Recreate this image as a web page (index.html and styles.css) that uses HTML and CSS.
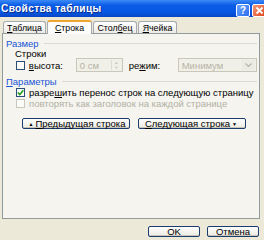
FILE: index.html
```html
<!DOCTYPE html>
<html lang="ru">
<head>
  <meta charset="UTF-8" />
  <title>Свойства таблицы</title>
  <link rel="stylesheet" href="styles.css">
</head>
<body>
  <div class="window">
    <div class="titlebar">
      <span class="title">Свойства таблицы</span>
      <div class="caption-btns">
        <span class="cap help">?</span>
        <span class="cap close">
          <svg width="9" height="9" viewBox="0 0 9 9"><path d="M1.5 1.5 L7.5 7.5 M7.5 1.5 L1.5 7.5" stroke="#fff" stroke-width="1.8"/></svg>
        </span>
      </div>
    </div>

    <div class="tabs">
      <div class="tab t1"><u>Т</u>аблица</div>
      <div class="tab t2 active"><u>С</u>трока</div>
      <div class="tab t3">Стол<u>б</u>ец</div>
      <div class="tab t4"><u>Я</u>чейка</div>
    </div>

    <div class="panel">
      <div class="group-title">Размер</div>
      <div class="sub">Строки</div>
      <div class="row size-row">
        <span class="check"></span>
        <span class="lbl"><u>в</u>ысота:</span>
        <span class="field spin">0 см<span class="spinner"><i>&#9650;</i><i>&#9660;</i></span></span>
        <span class="lbl mode">ре<u>ж</u>им:</span>
        <span class="field select">Минимум<span class="drop"><svg width="7" height="4" viewBox="0 0 7 4"><path d="M0.5 0.5 L3.5 3.5 L6.5 0.5" fill="none" stroke="#b8b7ac" stroke-width="1.2"/></svg></span></span>
      </div>

      <div class="group-title g2"><u>П</u>араметры</div>
      <div class="row opt">
        <span class="check checked"><svg width="7" height="7" viewBox="0 0 7 7"><path d="M0.8 3.5 L2.8 5.5 L6.3 1.2" fill="none" stroke="#21a121" stroke-width="1.6"/></svg></span>
        <span>разре<u>ш</u>ить перенос строк на следующую страницу</span>
      </div>
      <div class="row opt disabled">
        <span class="check"></span>
        <span>повторять как заголовок на каждой странице</span>
      </div>

      <div class="nav-btns">
        <span class="btn wide"><b class="arr">&#9650;</b> <u>П</u>редыдущая строка</span>
        <span class="btn wide"><u>С</u>ледующая строка <b class="arr">&#9660;</b></span>
      </div>
    </div>

    <div class="footer">
      <span class="btn ok">OK</span>
      <span class="btn cancel">Отмена</span>
    </div>
  </div>
</body>
</html>
```

FILE: styles.css
```css
* {
  margin: 0;
  padding: 0;
  box-sizing: border-box;
}
body {
  width: 264px;
  height: 240px;
  overflow: hidden;
  background: #ece9d8;
  font-family: "Liberation Sans", Arial, sans-serif;
  font-size: 9.5px;
  color: #000;
}
u {
  text-decoration: underline;
}
.titlebar {
  height: 17px;
  display: flex;
  align-items: center;
  justify-content: space-between;
  padding: 0 2px 0 1px;
  background: linear-gradient(#3d8bf7, #0c5ce8 30%, #0556e0 75%, #0a45c4);
}
.title {
  color: #fff;
  font-weight: bold;
  font-size: 10.2px;
  letter-spacing: 0.3px;
  text-shadow: 1px 1px 0 #0a2c8a;
}
.caption-btns {
  display: flex;
  gap: 2px;
  align-self: flex-end;
  margin-right: -4px;
}
.cap {
  width: 14px;
  height: 13px;
  border: 1px solid #fff;
  border-radius: 2px;
  display: flex;
  align-items: center;
  justify-content: center;
  color: #fff;
  font-weight: bold;
  font-size: 10px;
}
.help {
  background: linear-gradient(135deg, #6aa4ff, #2a6df0);
}
.close {
  background: linear-gradient(135deg, #f29a7a, #e0461c);
}
.tabs {
  display: flex;
  align-items: flex-end;
  height: 16px;
  padding-left: 3px;
  position: relative;
  z-index: 1;
}
.tab {
  height: 12px;
  border: 1px solid #a4aab0;
  border-bottom: none;
  border-radius: 3px 3px 0 0;
  background: linear-gradient(#fefefe, #ecebe6);
  display: flex;
  align-items: center;
  justify-content: center;
  margin-right: 1px;
  font-size: 8.8px;
}
.t1 { width: 43px; }
.t2 { width: 45px; }
.t3 { width: 44px; }
.t4 { width: 39px; }
.tab.active {
  height: 14px;
  margin-bottom: -1px;
  border-top: 2px solid #f0a530;
  background: #fcfcfb;
}
.panel {
  width: 258px;
  height: 186px;
  margin-left: 2px;
  border: 1px solid #919b9c;
  background: #f5f4ef;
  padding: 4px 2px 0 3px;
}
.group-title {
  display: flex;
  align-items: center;
  color: #2155d6;
  height: 11px;
}
.group-title::after {
  content: "";
  flex: 1;
  height: 1px;
  margin-left: 5px;
  background: #dcdbd2;
}
.g2 {
  margin-top: 4px;
}
.sub {
  margin-left: 9px;
  height: 9px;
  display: flex;
  align-items: center;
}
.row {
  display: flex;
  align-items: center;
  padding-left: 10px;
}
.size-row {
  height: 14px;
}
.check {
  width: 9px;
  height: 9px;
  border: 1px solid #2a4d7a;
  background: #fbfbf8;
  margin-right: 4px;
  display: flex;
  align-items: center;
  justify-content: center;
}
.lbl {
  width: 48px;
}
.lbl.mode {
  width: 50px;
  margin-left: 6px;
}
.field {
  height: 14px;
  border: 1px solid #c9c7ba;
  background: #f1f0e8;
  color: #b5b3a6;
  display: flex;
  align-items: center;
  padding-left: 3px;
  position: relative;
}
.spin {
  width: 48px;
}
.select {
  width: 81px;
}
.spinner {
  position: absolute;
  right: 1px;
  top: 1px;
  bottom: 1px;
  width: 10px;
  display: flex;
  flex-direction: column;
  border-left: 1px solid #dedcd0;
}
.spinner i {
  flex: 1;
  font-style: normal;
  font-size: 4px;
  color: #c2c0b4;
  display: flex;
  align-items: center;
  justify-content: center;
}
.drop {
  position: absolute;
  right: 1px;
  top: 1px;
  bottom: 1px;
  width: 13px;
  display: flex;
  align-items: center;
  justify-content: center;
  background: #ecebe3;
}
.opt {
  height: 11px;
}
.opt.disabled {
  color: #b3b1a4;
}
.opt.disabled .check {
  border-color: #c9c7ba;
}
.nav-btns {
  display: flex;
  gap: 8px;
  padding-left: 16px;
  margin-top: 9px;
}
.btn {
  height: 11px;
  border: 1px solid #1c3c6e;
  border-radius: 2px;
  background: linear-gradient(#fefefe, #eeede6 85%, #d8d6cc);
  display: flex;
  align-items: center;
  justify-content: center;
  box-shadow: inset 0 -1px 0 #c9c6b8;
}
.wide {
  width: 108px;
}
.arr {
  font-size: 5px;
  margin: 0 2px;
}
.footer {
  display: flex;
  justify-content: flex-end;
  gap: 7px;
  padding: 7px 5px 0 0;
}
.ok, .cancel {
  width: 52px;
  height: 11px;
}
```
